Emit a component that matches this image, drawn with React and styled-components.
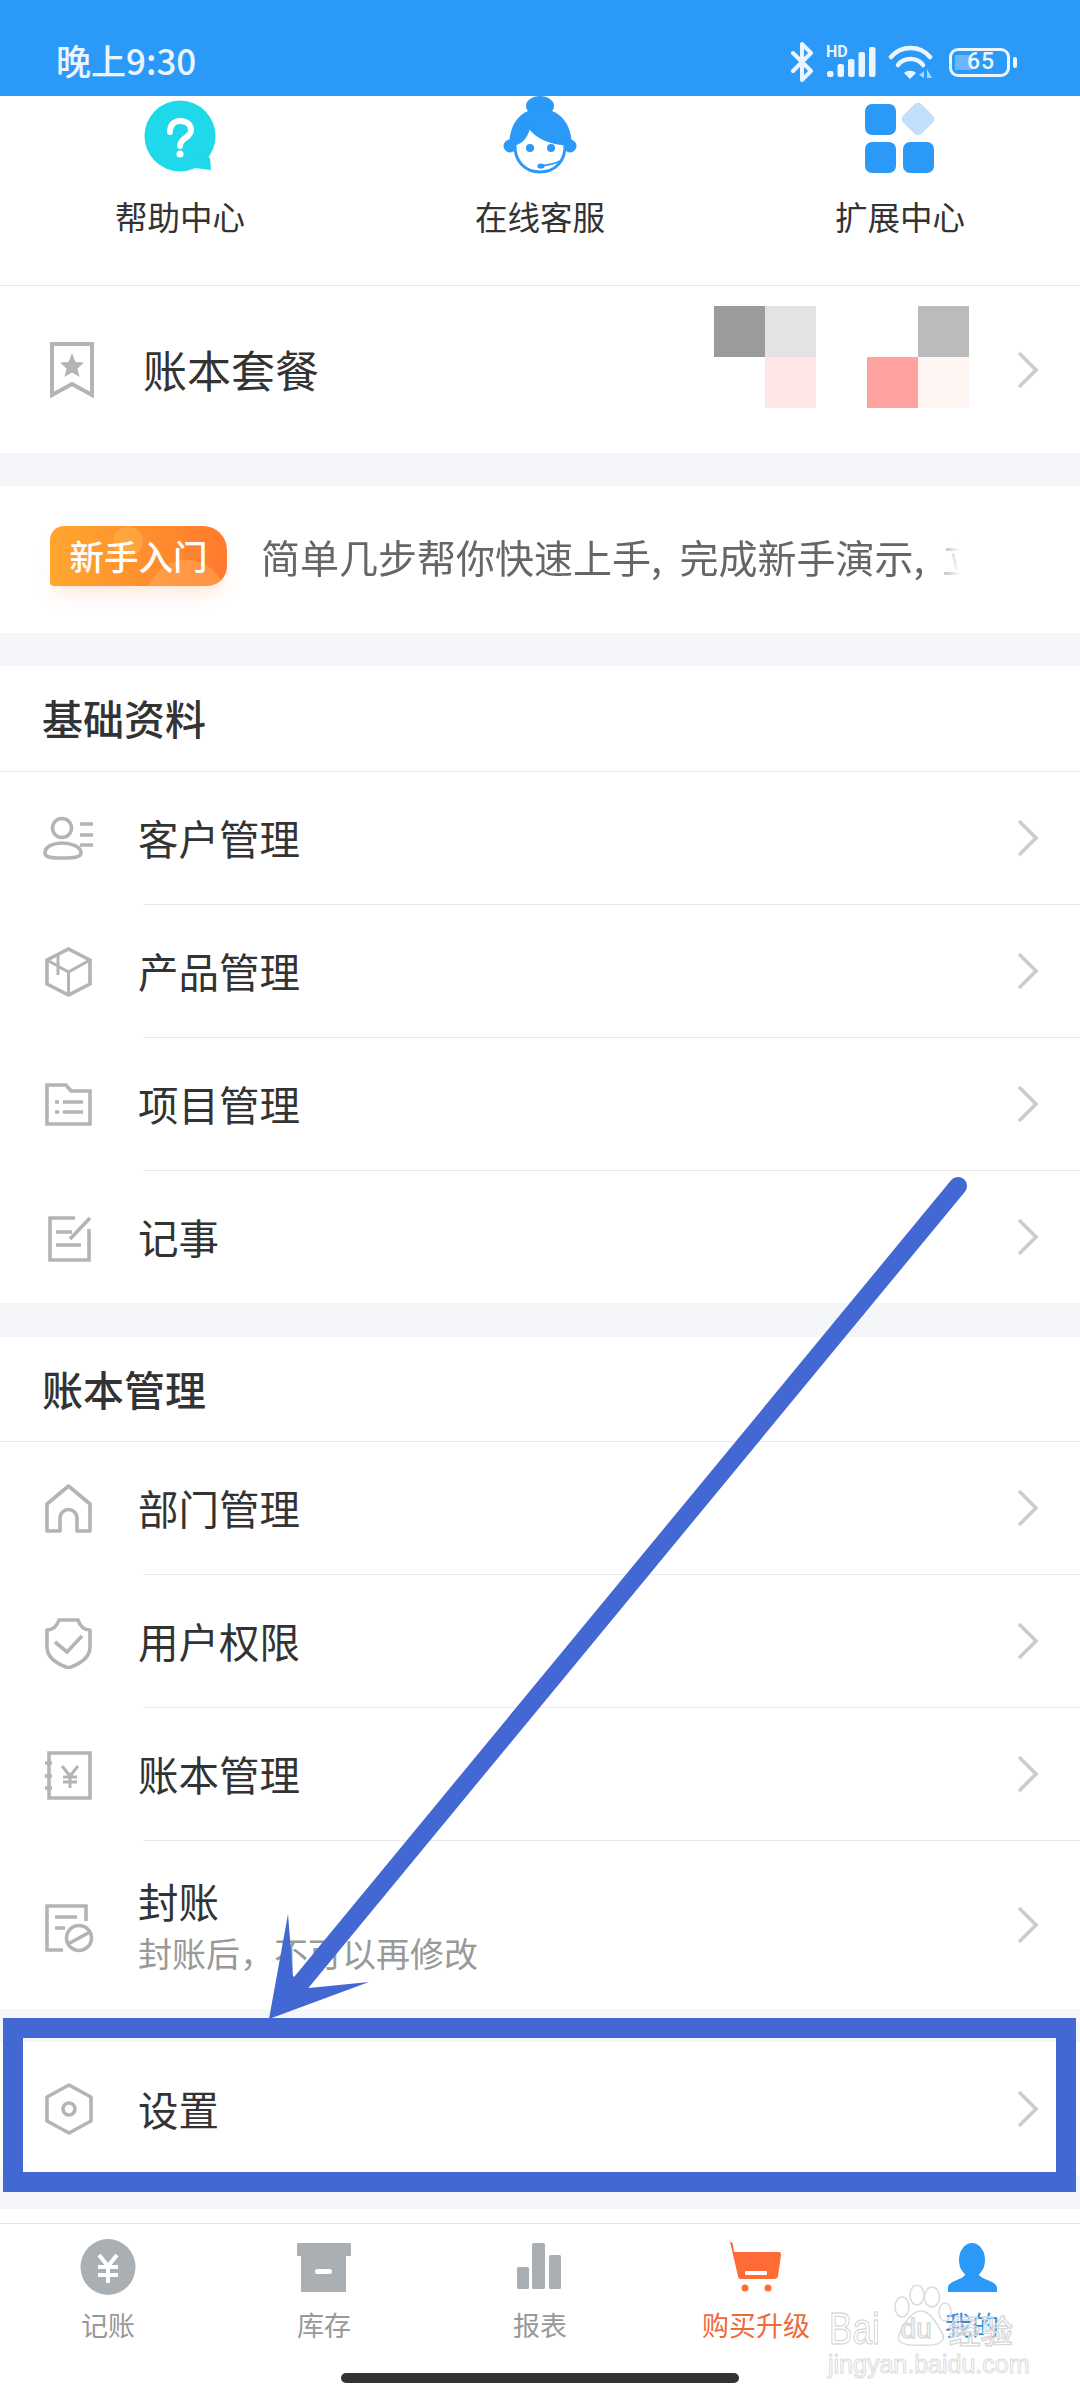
import React from 'react';
import styled, { createGlobalStyle } from 'styled-components';

const blue = '#2b99f8';
const iconGrey = '#b1b5b7';
const tabGrey = '#a9afb2';
const annotation = '#4368d4';

const GlobalStyle = createGlobalStyle`
  html, body { margin: 0; padding: 0; background: #fff; }
  * { box-sizing: border-box; }
`;

const Page = styled.div`
  position: relative;
  width: 1080px;
  height: 2400px;
  overflow: hidden;
  display: flex;
  flex-direction: column;
  background: #fff;
  color: #333;
  font-family: "Noto Sans CJK SC", "Noto Sans", sans-serif;
`;

const StatusBar = styled.div`
  height: 96px;
  flex: none;
  background: ${blue};
  color: #eaf5ff;
  display: flex;
  align-items: flex-end;
  justify-content: space-between;
  padding: 0 63px 14px 56px;
`;

const Clock = styled.div`
  font-size: 35px;
  line-height: 36px;
  font-weight: 500;
  margin-bottom: 4px;
`;

const StatusIcons = styled.div`
  display: flex;
  align-items: center;
  height: 40px;
`;

const Battery = styled.div`
  width: 61px;
  height: 29px;
  margin-left: 16px;
  border: 3.5px solid #eaf5ff;
  border-radius: 9px;
  background: linear-gradient(#6db5fb, #6db5fb) 3px center / 17px 15px no-repeat;
  display: flex;
  align-items: center;
  justify-content: center;
  font: 500 23px/22px Roboto, sans-serif;
  letter-spacing: 1px;
  padding-left: 3px;
`;

const BatteryNub = styled.div`
  width: 4px;
  height: 11px;
  margin-left: 3px;
  border-radius: 2px;
  background: #eaf5ff;
`;

const QuickGrid = styled.div`
  height: 190px;
  flex: none;
  display: grid;
  grid-template-columns: repeat(3, 360px);
  border-bottom: 1px solid #e6e6e6;
`;

const QuickItem = styled.div`
  display: flex;
  flex-direction: column;
  align-items: center;
`;

const QuickLabel = styled.div`
  font-size: 32.5px;
  line-height: 44px;
  margin-top: 18px;
`;

const Gap = styled.div`
  height: ${p => p.$h}px;
  flex: none;
  background: ${p => p.$white ? '#fff' : '#f5f6fa'};
`;

const Row = styled.div`
  height: ${p => p.$h || 132}px;
  flex: none;
  display: flex;
  align-items: center;
  padding: 0 40px;
  background: #fff;
`;

const RowIcon = styled.svg.attrs({ viewBox: '0 0 56 56', width: 56, height: 56 })`
  flex: none;
  fill: none;
  stroke: ${iconGrey};
  stroke-width: 3.6;
`;

const RowText = styled.div`
  margin-left: ${p => p.$wide ? 47 : 42}px;
  margin-bottom: ${p => p.$wide ? 2 : 0}px;
  display: flex;
  flex-direction: column;
`;

const RowTitle = styled.div`
  font-size: ${p => p.$big ? 44 : 40.5}px;
  line-height: 56px;
`;

const RowSub = styled.div`
  font-size: 34px;
  line-height: 48px;
  color: #999;
`;

const Chevron = styled.svg.attrs({ viewBox: '0 0 24 40', width: 24, height: 40 })`
  flex: none;
  margin-left: ${p => p.$flush ? 0 : 'auto'};
  fill: none;
  stroke: #ccc;
  stroke-width: 3.6;
`;

const Mosaic = styled.div`
  margin: 0 47px 26px auto;
  display: grid;
  grid-template-columns: repeat(5, 51px);
  grid-auto-rows: 51px;
`;

const MosaicCell = styled.div`
  background: ${p => p.$c};
`;

const Divider = styled.div`
  height: 1px;
  flex: none;
  margin-left: 143px;
  background: #e8e8e8;
`;

const Banner = styled.div`
  height: 147px;
  flex: none;
  display: flex;
  align-items: center;
  padding: 0 0 7px 50px;
  background: #fff;
`;

const Badge = styled.div`
  width: 177px;
  height: 60px;
  flex: none;
  border-radius: 14px 24px 20px 4px;
  background:
    radial-gradient(circle 40px at 77% 123%, rgba(255, 190, 110, .35) 99%, transparent),
    radial-gradient(circle 15px at 44% 26%, rgba(255, 190, 90, .4) 99%, transparent),
    linear-gradient(to right, #ffa72f, #ff7a2e);
  box-shadow: 0 12px 18px -6px rgba(255, 150, 70, .25);
  color: #fff;
  font-size: 34.5px;
  line-height: 58px;
  font-weight: 500;
  text-align: center;
`;

const BannerText = styled.div`
  width: 699px;
  margin-left: 34px;
  overflow: hidden;
  white-space: nowrap;
  font-size: 39px;
  line-height: 56px;
  word-spacing: 9px;
  color: #666;
  -webkit-mask-image: linear-gradient(to right, #000 660px, transparent 699px);
  mask-image: linear-gradient(to right, #000 660px, transparent 699px);
`;

const SectionHead = styled.div`
  height: ${p => p.$h || 105}px;
  flex: none;
  display: flex;
  align-items: center;
  padding: 0 0 3px 42px;
  border-bottom: 1px solid #e8e8e8;
  font-size: 41px;
  font-weight: 500;
  background: #fff;
`;

const TabBar = styled.div`
  flex: 1;
  display: flex;
  flex-direction: column;
  border-top: 1px solid #e4e4e4;
  background: #fff;
`;

const Tabs = styled.div`
  display: grid;
  grid-template-columns: repeat(5, 216px);
  padding-top: 14px;
`;

const Tab = styled.div`
  display: flex;
  flex-direction: column;
  align-items: center;
`;

const TabLabel = styled.div`
  margin-top: 9px;
  font-size: 27px;
  line-height: 36px;
  color: ${p => p.$color || '#999'};
`;

const HomeBar = styled.div`
  width: 398px;
  height: 10px;
  margin: 30px auto 0;
  border-radius: 5px;
  background: #333;
`;

const HighlightBox = styled.div`
  position: absolute;
  left: 3px;
  top: 2018px;
  width: 1073px;
  height: 174px;
  border: 20px solid ${annotation};
  pointer-events: none;
`;

const ArrowOverlay = styled.svg`
  position: absolute;
  left: 0;
  top: 0;
  pointer-events: none;
`;

const Watermark = styled.div`
  position: absolute;
  left: 828px;
  top: 2285px;
  width: 200px;
  height: 100px;
  pointer-events: none;
  white-space: nowrap;
`;

const WatermarkPaw = styled.svg`
  position: absolute;
  left: 65px;
  top: 0;
`;

const WatermarkLogo = styled.div`
  position: absolute;
  left: 1px;
  top: 22px;
  display: flex;
  align-items: center;
  height: 44px;
  font: 400 44px/44px "Liberation Sans", sans-serif;
  color: rgba(255, 255, 255, .4);
  -webkit-text-stroke: 1.4px #d9d9d9;
`;

const WatermarkBai = styled.span`
  display: inline-block;
  transform: scaleX(.8);
  transform-origin: left center;
`;

const WatermarkDu = styled.span`
  margin-left: 8px;
  font-size: 28px;
`;

const WatermarkCn = styled.span`
  margin-left: 17px;
  font: 500 32px/44px "Noto Sans CJK SC", sans-serif;
`;

const WatermarkUrl = styled.div`
  position: absolute;
  left: 0;
  top: 64px;
  font: 400 25px/30px "Liberation Sans", sans-serif;
  color: #fff;
  -webkit-text-stroke: 1px #dcdcdc;
`;

const RowChevron = ({ flush }) => (
  <Chevron $flush={flush}>
    <path d="M3 3 L20 20 L3 37" />
  </Chevron>
);

const mosaicCells = [
  '#9b9b9b', '#e3e3e3', 'transparent', 'transparent', '#bbbbbb',
  'transparent', '#ffe6e6', 'transparent', '#ffa3a0', '#fff5f3',
];

const HelpIcon = () => (
  <svg width="80" height="80" viewBox="0 0 80 80">
    <circle cx="40" cy="40" r="35.5" fill="#1fd8ea" />
    <path d="M62 58 L70 62 L71 74 L55 72 Z" fill="#1fd8ea" />
    <path d="M30 36 C30 29 34 25 40 25 C47 25 51 29 51 34 C51 40 45 41 42 45 C41 46 40 48 40 50" fill="none" stroke="#fff" strokeWidth="6" strokeLinecap="round" />
    <circle cx="40" cy="58" r="3.6" fill="#fff" />
  </svg>
);

const AgentIcon = () => (
  <svg width="80" height="80" viewBox="0 0 80 80">
    <ellipse cx="40" cy="10" rx="14" ry="10" fill={blue} />
    <path d="M9 52 C9 25 22 13 40 13 C58 13 72 25 72 52 Z" fill={blue} />
    <circle cx="10" cy="50" r="6.5" fill={blue} />
    <circle cx="70" cy="50" r="6.5" fill={blue} />
    <path d="M15 48 C22 46 27 40 29 30 C36 42 52 47 65 48 C66 66 54 76 40 76 C26 76 14 66 15 48 Z" fill="#fff" stroke={blue} strokeWidth="3" />
    <circle cx="30" cy="52" r="4" fill={blue} />
    <circle cx="51" cy="52" r="4" fill={blue} />
    <path d="M60 65 C55 68 48 69 41 70" fill="none" stroke={blue} strokeWidth="2" />
    <ellipse cx="41" cy="70" rx="3.6" ry="2.6" fill={blue} />
  </svg>
);

const ExtIcon = () => (
  <svg width="80" height="80" viewBox="0 0 80 80">
    <rect x="5" y="8" width="31" height="31" rx="7" fill={blue} />
    <rect x="5" y="46" width="31" height="31" rx="7" fill={blue} />
    <rect x="43" y="46" width="31" height="31" rx="7" fill={blue} />
    <rect x="45" y="10" width="26" height="26" rx="5" fill="#c2e0fb" transform="rotate(45 58 23)" />
  </svg>
);

const rowIcons = {
  plan: (
    <RowIcon>
      <path d="M12 2 H52 V53 L32 42 L12 53 Z" strokeWidth="4" />
      <path d="M32 11 L35.5 20 L44 20.5 L37.5 26.5 L39.5 35 L32 30.5 L24.5 35 L26.5 26.5 L20 20.5 L28.5 20 Z" fill={iconGrey} stroke="none" />
    </RowIcon>
  ),
  customer: (
    <RowIcon>
      <circle cx="22" cy="18" r="9.5" />
      <path d="M5 43 C5 36 14 33 22 33 C30 33 41 36 41 43 C41 48 30 48 22 48 C14 48 5 48 5 43 Z" />
      <path d="M40 14 H53 M40 25 H53 M40 35 H53" />
    </RowIcon>
  ),
  product: (
    <RowIcon>
      <path d="M28.5 6 L50 17 V41 L28.5 52 L7 41 V17 Z" />
      <path d="M7 17 L28.5 29 L50 17 M28.5 29 V52 M18 12 V32" strokeWidth="3" />
    </RowIcon>
  ),
  project: (
    <RowIcon>
      <path d="M7 9 H26 L31 15 H50 V48 H7 Z" />
      <path d="M23 26 H43 M23 36 H43" />
      <path d="M15 26 H19 M15 36 H19" />
    </RowIcon>
  ),
  note: (
    <RowIcon>
      <path d="M35 9 H10 V51 H49 V20" />
      <path d="M50 9 L30 30 M16 23 H32 M16 36 H41" />
    </RowIcon>
  ),
  dept: (
    <RowIcon>
      <path d="M7 51 V24 L28.5 6 L50 24 V51 H37 V38 A8.5 8.5 0 0 0 20 38 V51 Z" strokeLinejoin="round" />
    </RowIcon>
  ),
  perm: (
    <RowIcon>
      <path d="M7 17 C13 17 17 13 19 7 H38 C40 13 44 17 50 17 V34 C50 44 40 51 28.5 55 C17 51 7 44 7 34 Z" strokeLinejoin="round" />
      <path d="M15 29 L27 39 L42 23" />
    </RowIcon>
  ),
  book: (
    <RowIcon>
      <path d="M9 7 H50 V52 H9 Z" />
      <path d="M5 17 H12 M5 30 H12 M5 42 H12" />
      <path d="M22 20 L30 30 L38 20 M30 30 V42 M23 31 H37 M23 36 H37" strokeWidth="3" />
    </RowIcon>
  ),
  seal: (
    <RowIcon>
      <path d="M46 24 V9 H7 V53 H23" />
      <path d="M15 20 H37 M15 31 H25" />
      <circle cx="39" cy="41" r="12.5" />
      <path d="M28 47 L50 35" />
    </RowIcon>
  ),
  settings: (
    <RowIcon>
      <path d="M29 4 L51 16 V40 L29 52 L7 40 V16 Z" strokeLinejoin="round" />
      <circle cx="29" cy="28" r="6" />
    </RowIcon>
  ),
};

const basics = [
  { key: 'customer', title: '客户管理' },
  { key: 'product', title: '产品管理' },
  { key: 'project', title: '项目管理' },
  { key: 'note', title: '记事' },
];

const ledger = [
  { key: 'dept', title: '部门管理' },
  { key: 'perm', title: '用户权限' },
  { key: 'book', title: '账本管理' },
];

const ListRow = ({ icon, title, sub, h }) => (
  <Row $h={h}>
    {rowIcons[icon]}
    <RowText>
      <RowTitle>{title}</RowTitle>
      {sub && <RowSub>{sub}</RowSub>}
    </RowText>
    <RowChevron />
  </Row>
);

const TabIcon = ({ children }) => (
  <svg width="60" height="60" viewBox="0 0 60 60">{children}</svg>
);

export default function App() {
  return (
    <Page>
      <GlobalStyle />
      <StatusBar>
        <Clock>晚上9:30</Clock>
        <StatusIcons>
          <svg width="24" height="40" viewBox="0 0 24 40" fill="none" stroke="#eaf5ff" strokeWidth="4" strokeLinecap="round" strokeLinejoin="round">
            <path d="M3 11 L21 29 L12 38 V2 L21 11 L3 29" />
          </svg>
          <svg width="52" height="36" viewBox="0 0 52 36" style={{ marginLeft: 12 }}>
            <text x="0" y="13" fontFamily="Roboto, sans-serif" fontSize="16" fontWeight="700" fill="#eaf5ff">HD</text>
            <g fill="#eaf5ff">
              <rect x="1" y="27" width="6.5" height="6" rx="2" />
              <rect x="11.5" y="20" width="6.5" height="13" rx="2" />
              <rect x="22" y="15" width="6.5" height="18" rx="2" />
              <rect x="32.5" y="8" width="6.5" height="25" rx="2" />
              <rect x="43" y="3" width="6.5" height="30" rx="2" />
            </g>
          </svg>
          <svg width="45" height="36" viewBox="0 0 45 36" style={{ marginLeft: 10 }} fill="none" stroke="#eaf5ff" strokeWidth="4.5" strokeLinecap="round">
            <path d="M3 13 C13 1 32 1 42 13" />
            <path d="M10 21 C16 13 29 13 35 21" />
            <path d="M16 29 L22 35 L28 29 C25 26 19 26 16 29 Z" fill="#eaf5ff" stroke="none" />
            <path d="M36 27 L31 31 L36 34 Z M39 25 L44 34 H39 Z" fill="#a8d6fc" stroke="none" />
          </svg>
          <Battery>65</Battery>
          <BatteryNub />
        </StatusIcons>
      </StatusBar>

      <QuickGrid>
        <QuickItem><HelpIcon /><QuickLabel>帮助中心</QuickLabel></QuickItem>
        <QuickItem><AgentIcon /><QuickLabel>在线客服</QuickLabel></QuickItem>
        <QuickItem><ExtIcon /><QuickLabel>扩展中心</QuickLabel></QuickItem>
      </QuickGrid>

      <Row $h={167}>
        {rowIcons.plan}
        <RowText $wide><RowTitle $big>账本套餐</RowTitle></RowText>
        <Mosaic>
          {mosaicCells.map((c, i) => <MosaicCell key={i} $c={c} />)}
        </Mosaic>
        <RowChevron flush />
      </Row>
      <Gap $h={33} />

      <Banner>
        <Badge>新手入门</Badge>
        <BannerText>简单几步帮你快速上手, 完成新手演示, 立即开始体验吧</BannerText>
      </Banner>
      <Gap $h={33} />

      <SectionHead $h={106}>基础资料</SectionHead>
      {basics.map((item, i) => (
        <React.Fragment key={item.key}>
          <ListRow icon={item.key} title={item.title} />
          {i < basics.length - 1 && <Divider />}
        </React.Fragment>
      ))}
      <Gap $h={34} />

      <SectionHead>账本管理</SectionHead>
      {ledger.map(item => (
        <React.Fragment key={item.key}>
          <ListRow icon={item.key} title={item.title} />
          <Divider />
        </React.Fragment>
      ))}
      <ListRow icon="seal" title="封账" sub="封账后，不可以再修改" h={168} />
      <Gap $h={33} />
      <ListRow icon="settings" title="设置" h={133} />
      <Gap $h={34} />
      <Gap $h={14} $white />

      <TabBar>
        <Tabs>
          <Tab>
            <TabIcon>
              <ellipse cx="30" cy="29" rx="27.5" ry="28" fill={tabGrey} />
              <path d="M21 17 L30 28 L39 17 M30 28 V45 M20 29 H40 M20 37 H40" fill="none" stroke="#fff" strokeWidth="4" />
            </TabIcon>
            <TabLabel>记账</TabLabel>
          </Tab>
          <Tab>
            <TabIcon>
              <rect x="3" y="5" width="54" height="13" rx="1" fill={tabGrey} />
              <rect x="7" y="18" width="45" height="36" fill={tabGrey} />
              <rect x="21" y="31" width="17" height="5" rx="2.5" fill="#fff" />
            </TabIcon>
            <TabLabel>库存</TabLabel>
          </Tab>
          <Tab>
            <TabIcon>
              <rect x="7" y="29" width="12" height="22" rx="1.5" fill={tabGrey} />
              <rect x="22" y="5" width="13" height="46" rx="1.5" fill={tabGrey} />
              <rect x="39" y="17" width="12" height="34" rx="1.5" fill={tabGrey} />
            </TabIcon>
            <TabLabel>报表</TabLabel>
          </Tab>
          <Tab>
            <TabIcon>
              <path d="M4 4 C6 4 7 5 7 7 L8 14 H53 C55 14 55 16 55 17 L52 38 C52 40 50 41 48 41 H15 C13 41 12 40 12 38 Z" fill="#ff6b35" />
              <rect x="19" y="33" width="22" height="4" rx="1" fill="#fff" />
              <circle cx="19" cy="50" r="3.5" fill="#ff6b35" />
              <circle cx="42" cy="50" r="3.5" fill="#ff6b35" />
            </TabIcon>
            <TabLabel $color="#f0693a">购买升级</TabLabel>
          </Tab>
          <Tab>
            <TabIcon>
              <ellipse cx="30" cy="22" rx="13" ry="17" fill={blue} />
              <path d="M24 34 C24 42 6 42 6 50 V54 H55 V50 C55 42 36 42 36 34 Z" fill={blue} />
            </TabIcon>
            <TabLabel $color="#2b8fe8">我的</TabLabel>
          </Tab>
        </Tabs>
        <HomeBar />
      </TabBar>

      <HighlightBox />
      <ArrowOverlay width="1080" height="2400" viewBox="0 0 1080 2400">
        <path d="M958 1186 L300 1984" stroke={annotation} strokeWidth="18" strokeLinecap="round" fill="none" />
        <path d="M269 2019 L288 1914 L293 1976 L309 1988 L369 1982 Z" fill={annotation} />
      </ArrowOverlay>

      <Watermark>
        <WatermarkPaw width="60" height="62" viewBox="0 0 60 62" fill="none" stroke="#dcdcdc" strokeWidth="1.6">
          <ellipse cx="9" cy="22" rx="7" ry="10" />
          <ellipse cx="24" cy="10" rx="7" ry="10" />
          <ellipse cx="39" cy="12" rx="7.5" ry="10" />
          <ellipse cx="52" cy="27" rx="6" ry="9" />
          <path d="M6 50 C10 40 18 26 28 26 C38 26 46 42 50 50 C52 58 44 61 28 60 C12 61 3 58 6 50 Z" />
        </WatermarkPaw>
        <WatermarkLogo>
          <WatermarkBai>Bai</WatermarkBai><WatermarkDu>du</WatermarkDu><WatermarkCn>经验</WatermarkCn>
        </WatermarkLogo>
        <WatermarkUrl>jingyan.baidu.com</WatermarkUrl>
      </Watermark>
    </Page>
  );
}
